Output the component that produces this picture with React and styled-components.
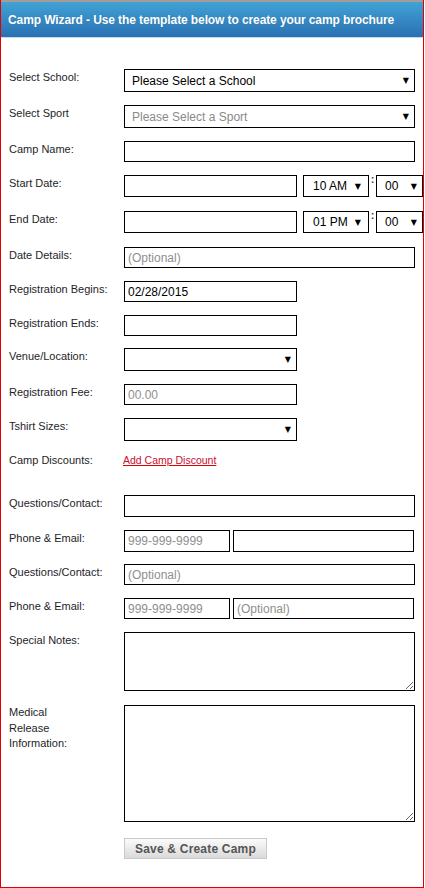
import React from 'react'
import styled, { createGlobalStyle } from 'styled-components'

const GlobalStyle = createGlobalStyle`
body {
    margin: 0;
    background: #fff;
    font-family: "Liberation Sans", Arial, sans-serif;
}
`;

const Page = styled.div`
width: 424px;
height: 888px;
box-sizing: border-box;
border: 1px solid #e00000;
border-top: none;
background: #fff;
`;

const Header = styled.div`
height: 38px;
box-sizing: border-box;
border-top: 2px solid #a59a9c;
border-bottom: 1px solid #c6dbea;
background: linear-gradient(#41a3d4, #2a70b3);
display: flex;
align-items: center;
padding-left: 7px;

h1{
    margin: 0;
    font-size: 12px;
    font-weight: bold;
    letter-spacing: -0.1px;
    color: #fff;
    text-shadow: 0 0 1px rgba(0,0,0,0.2);
}
`;

const Form = styled.form`
padding: 31px 0 0 8px;
`;

const Row = styled.div`
display: grid;
grid-template-columns: 115px auto;
align-items: start;
margin-bottom: ${p => p.$gap ?? 13}px;
`;

const Label = styled.label`
font-size: 11px;
line-height: ${p => p.$lines ? '15.5px' : '15px'};
padding-top: ${p => p.$lines ? '0' : '1px'};
color: #1e1e28;
`;

const Field = styled.div`
display: flex;
align-items: flex-start;
gap: ${p => p.$gap ?? 0}px;
`;

const Input = styled.input`
width: ${p => p.$w}px;
height: ${p => p.$h ?? 21}px;
box-sizing: border-box;
border: 1px solid #000;
padding: 0 3px;
margin: 0;
font-family: "Liberation Sans", Arial, sans-serif;
font-size: 12px;
color: #000;
outline: none;

&::placeholder{
    color: #8f8f8f;
}
`;

const TextArea = styled.textarea`
display: block;
width: 291px;
height: ${p => p.$h}px;
box-sizing: border-box;
border: 1px solid #000;
margin: 0;
padding: 2px 3px;
font-family: "Liberation Sans", Arial, sans-serif;
font-size: 12px;
outline: none;
`;

const SelectBox = styled.div`
width: ${p => p.$w}px;
height: ${p => p.$h ?? 23}px;
box-sizing: border-box;
border: 1px solid #000;
display: flex;
align-items: center;
justify-content: space-between;
padding: 0 ${p => p.$pr ?? 5}px 0 ${p => p.$pl ?? 7}px;
margin-left: ${p => p.$ml ?? 0}px;
font-size: 12px;
color: ${p => p.$muted ? '#8a8a8a' : '#000'};
background: #fff;
`;

const Arrow = styled.span`
font-family: "DejaVu Sans", sans-serif;
font-size: 8px;
color: #000;
`;

const Colon = styled.span`
width: 7px;
text-align: center;
font-size: 11px;
line-height: 9px;
color: #26456e;
font-weight: bold;
`;

const Link = styled.a`
font-size: 10.5px;
line-height: 15px;
padding-top: 1px;
margin-left: -1px;
color: #c8102e;
text-decoration: underline;
text-decoration-color: #e00000;
cursor: pointer;
`;

const Button = styled.button`
margin-left: 115px;
height: 21px;
padding: 0 10px;
border: 1px solid #c9c9c9;
background: linear-gradient(#fbfbfb, #dadada);
font-family: "Liberation Sans", Arial, sans-serif;
font-size: 12px;
font-weight: bold;
letter-spacing: 0.2px;
color: #555;
cursor: pointer;
`;

const Select = ({ w, h, value, muted, pl, pr, ml }) => (
    <SelectBox $w={w} $h={h} $muted={muted} $pl={pl} $pr={pr} $ml={ml}>
        <span>{value}</span>
        <Arrow>▼</Arrow>
    </SelectBox>
)

const DateRow = ({ label, hour }) => (
    <Row $gap={14}>
        <Label>{label}</Label>
        <Field>
            <Input $w={173} $h={22} />
            <Select w={66} h={22} value={hour} pl={9} pr={7} ml={6} />
            <Colon>:</Colon>
            <Select w={47} h={22} value="00" pl={8} pr={5} />
        </Field>
    </Row>
)

const App = () => {
    return (
        <>
          <GlobalStyle />
          <Page>
            <Header>
                <h1>Camp Wizard - Use the template below to create your camp brochure</h1>
            </Header>
            <Form>
                <Row>
                    <Label>Select School:</Label>
                    <Select w={291} value="Please Select a School" />
                </Row>
                <Row>
                    <Label>Select Sport</Label>
                    <Select w={291} value="Please Select a Sport" muted />
                </Row>
                <Row>
                    <Label>Camp Name:</Label>
                    <Input $w={291} />
                </Row>
                <DateRow label="Start Date:" hour="10 AM" />
                <DateRow label="End Date:" hour="01 PM" />
                <Row>
                    <Label>Date Details:</Label>
                    <Input $w={291} placeholder="(Optional)" />
                </Row>
                <Row>
                    <Label>Registration Begins:</Label>
                    <Input $w={173} defaultValue="02/28/2015" />
                </Row>
                <Row $gap={12}>
                    <Label>Registration Ends:</Label>
                    <Input $w={173} />
                </Row>
                <Row>
                    <Label>Venue/Location:</Label>
                    <Select w={173} value="" />
                </Row>
                <Row>
                    <Label>Registration Fee:</Label>
                    <Input $w={173} placeholder="00.00" />
                </Row>
                <Row $gap={11}>
                    <Label>Tshirt Sizes:</Label>
                    <Select w={173} value="" />
                </Row>
                <Row $gap={27}>
                    <Label>Camp Discounts:</Label>
                    <Link>Add Camp Discount</Link>
                </Row>
                <Row>
                    <Label>Questions/Contact:</Label>
                    <Input $w={291} $h={22} />
                </Row>
                <Row $gap={12}>
                    <Label>Phone &amp; Email:</Label>
                    <Field $gap={3}>
                        <Input $w={106} $h={22} placeholder="999-999-9999" />
                        <Input $w={181} $h={22} />
                    </Field>
                </Row>
                <Row>
                    <Label>Questions/Contact:</Label>
                    <Input $w={291} placeholder="(Optional)" />
                </Row>
                <Row>
                    <Label>Phone &amp; Email:</Label>
                    <Field $gap={3}>
                        <Input $w={106} placeholder="999-999-9999" />
                        <Input $w={181} placeholder="(Optional)" />
                    </Field>
                </Row>
                <Row $gap={14}>
                    <Label>Special Notes:</Label>
                    <TextArea $h={59} />
                </Row>
                <Row $gap={16}>
                    <Label $lines>Medical<br />Release<br />Information:</Label>
                    <TextArea $h={117} />
                </Row>
                <Button type="button">Save &amp; Create Camp</Button>
            </Form>
          </Page>
        </>
    )
}

export default App
